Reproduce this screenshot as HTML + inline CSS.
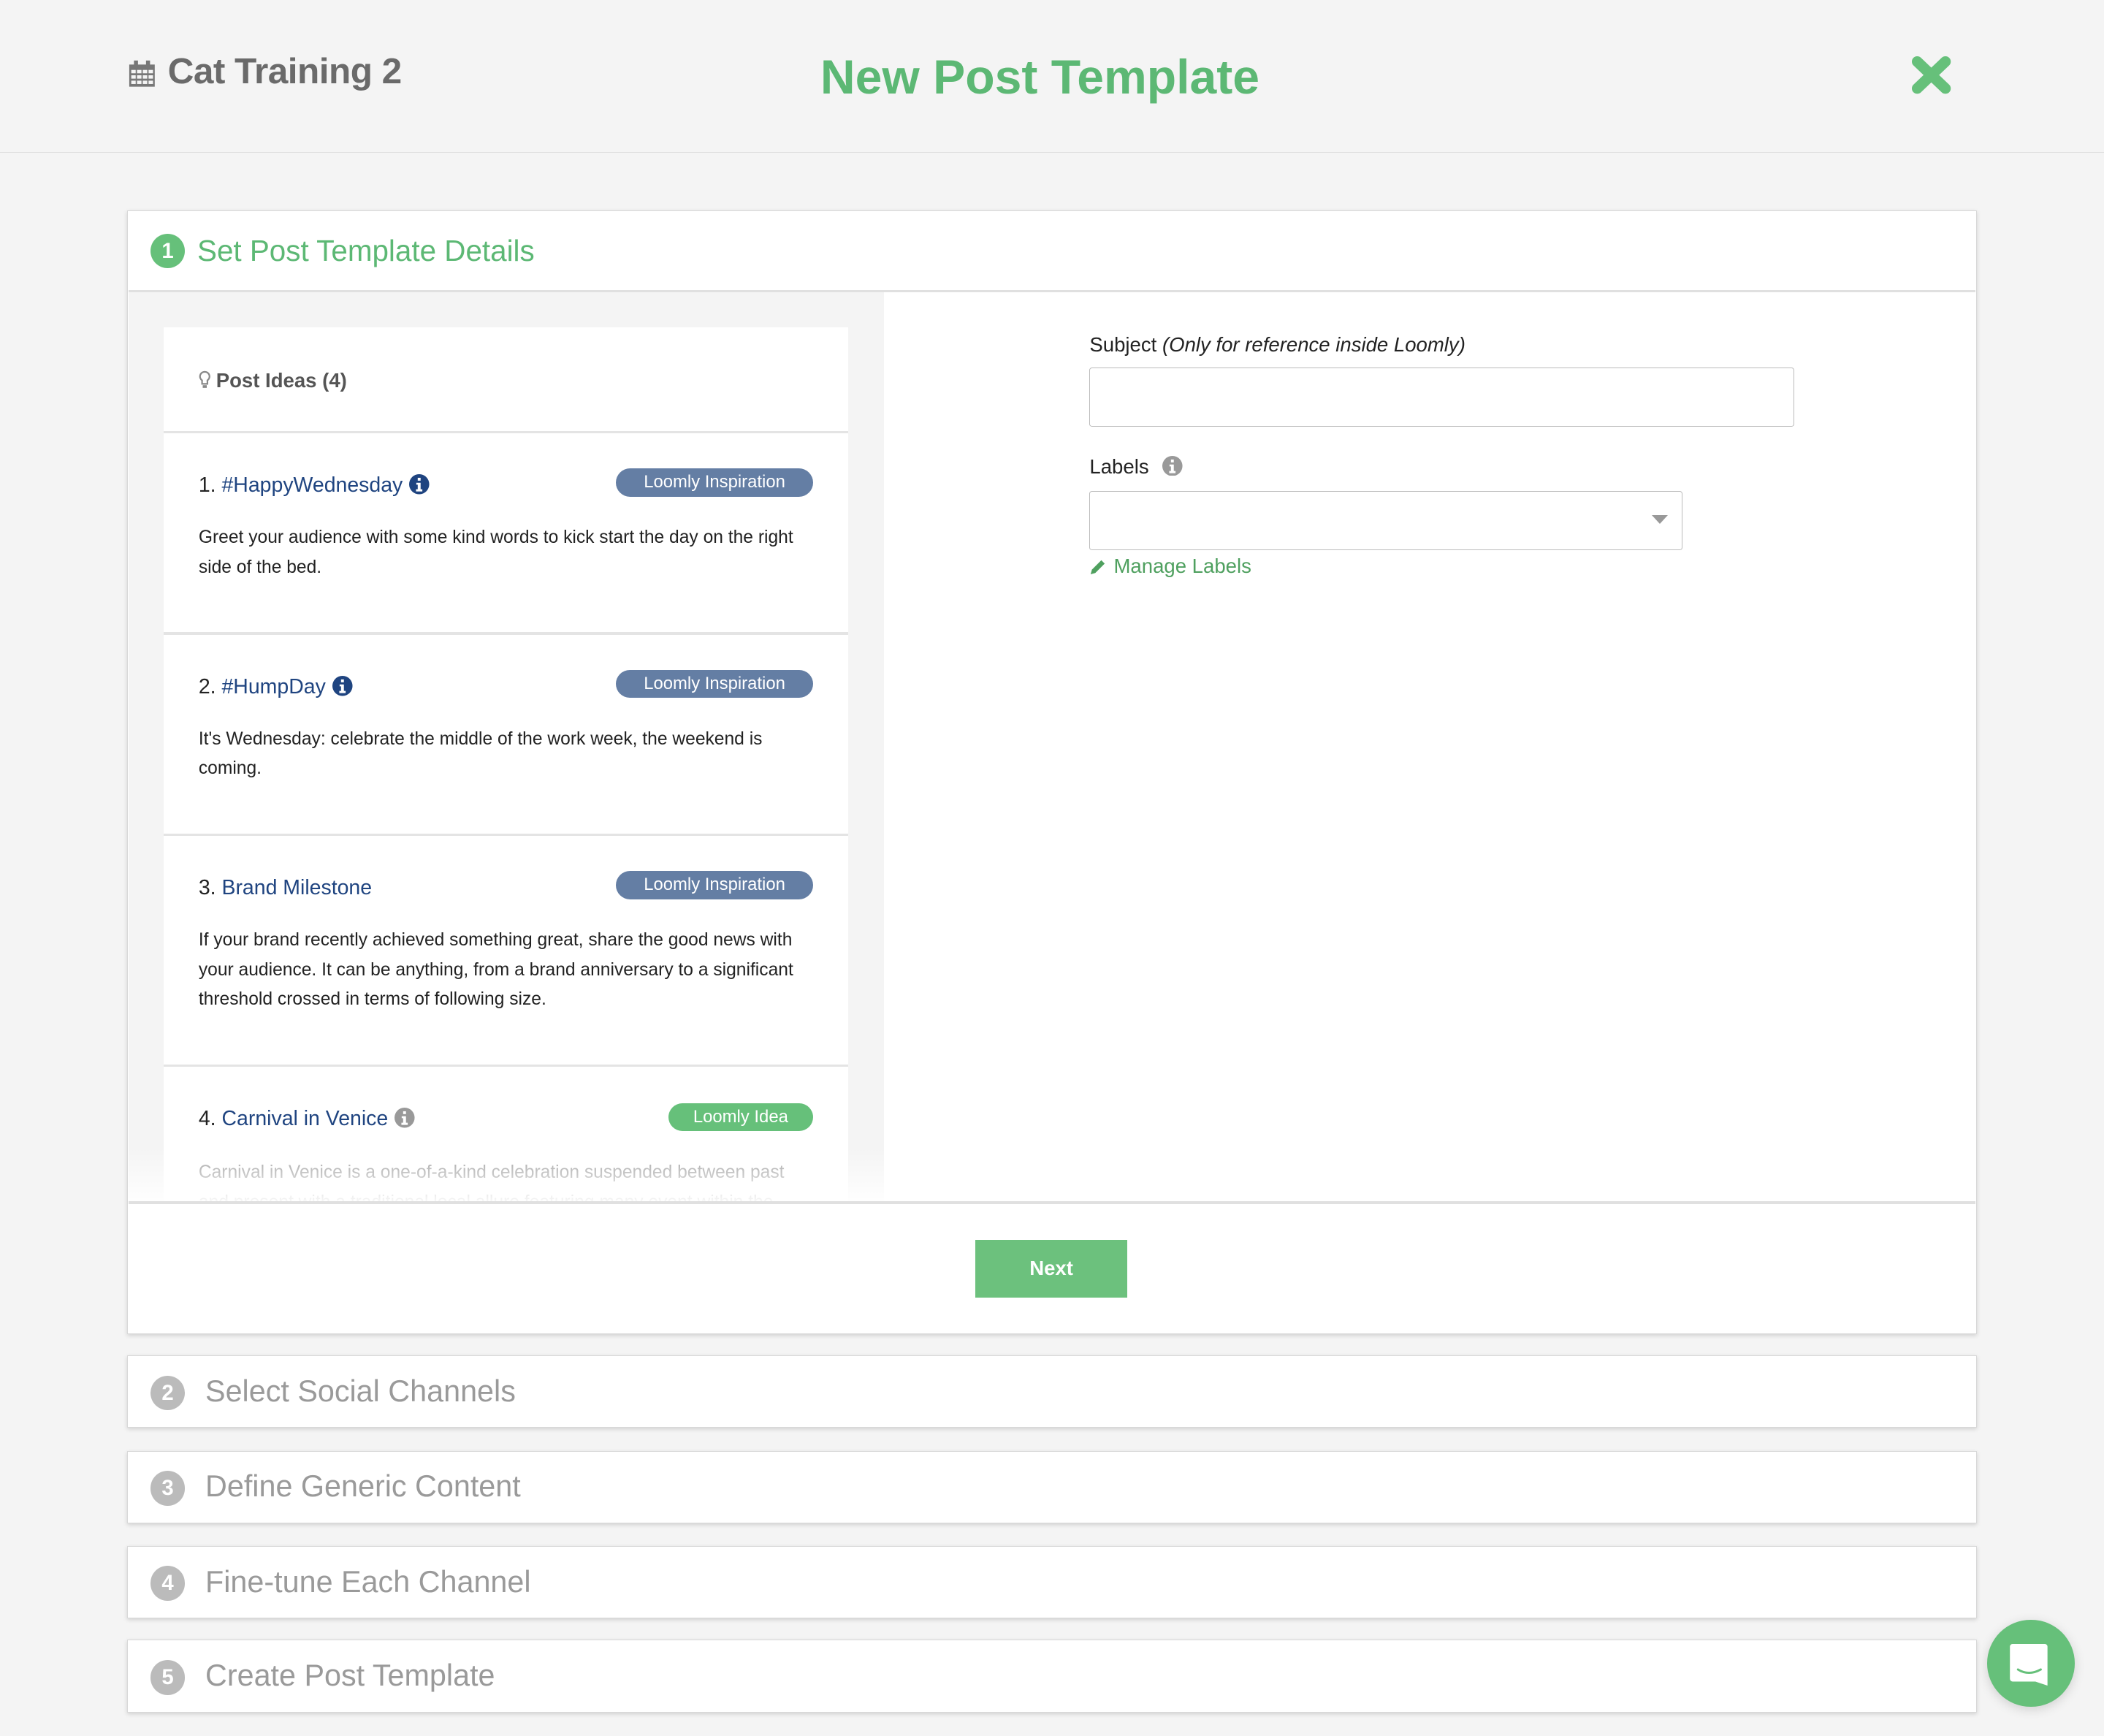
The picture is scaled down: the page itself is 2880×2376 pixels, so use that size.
<!DOCTYPE html>
<html><head><meta charset="utf-8"><style>
*{margin:0;padding:0;box-sizing:border-box}
html,body{width:2880px;height:2376px;overflow:hidden;background:#f4f4f4}
#w{zoom:1.836735;width:1568px;height:1294px;position:relative;font-family:"Liberation Sans",sans-serif}
.a{position:absolute}
.card{position:absolute;left:95px;width:1378px;background:#fff;border:1px solid #d8d8d8;box-shadow:0 1px 3px rgba(0,0,0,.15)}
.num{position:absolute;width:26px;height:26px;border-radius:50%;color:#fff;font-weight:bold;font-size:16px;text-align:center;line-height:26px}
.badge{position:absolute;height:21px;border-radius:11px;color:#fff;font-size:13px;line-height:21px;text-align:center}
.title{position:absolute;left:148px;font-size:15.5px;color:#222}
.title span{color:#1f4480}
.desc{position:absolute;left:148px;width:458px;font-size:13.4px;line-height:22px;color:#222}
.sep{position:absolute;left:122px;width:510px;height:2px;background:#e4e4e4}
.info{display:inline-block;vertical-align:-2px;margin-left:5px}
.ct{position:absolute;left:153px;font-size:22.5px;color:#9a9a9a}
</style></head><body><div id="w">
<div class="a" style="left:0;top:113px;width:1568px;height:1px;background:#ddd"></div>
<svg class="a" style="left:96px;top:44px" width="20" height="21" viewBox="0 0 20 21"><rect x="0.5" y="4" width="19" height="16.5" fill="#777"/><rect x="4" y="1" width="3" height="6" fill="#777"/><rect x="13" y="1" width="3" height="6" fill="#777"/><g fill="#f4f4f4"><rect x="2" y="8" width="3.3" height="2.5"/><rect x="6.3" y="8" width="3.3" height="2.5"/><rect x="10.6" y="8" width="3.3" height="2.5"/><rect x="14.9" y="8" width="3.3" height="2.5"/><rect x="2" y="12" width="3.3" height="2.5"/><rect x="6.3" y="12" width="3.3" height="2.5"/><rect x="10.6" y="12" width="3.3" height="2.5"/><rect x="14.9" y="12" width="3.3" height="2.5"/><rect x="2" y="16" width="3.3" height="2.5"/><rect x="6.3" y="16" width="3.3" height="2.5"/><rect x="10.6" y="16" width="3.3" height="2.5"/><rect x="14.9" y="16" width="3.3" height="2.5"/></g></svg>
<div class="a" style="left:125px;top:37px;font-size:27px;font-weight:bold;color:#6a6a6a;letter-spacing:-0.3px">Cat Training 2</div>
<div class="a" style="left:575px;width:400px;text-align:center;top:37px;font-size:36px;font-weight:bold;color:#5cb874">New Post Template</div>
<svg class="a" style="left:1425px;top:42px" width="29" height="28" viewBox="0 0 29 28"><path d="M4 4L25 24M25 4L4 24" stroke="#66c07a" stroke-width="8" stroke-linecap="round"/></svg>

<div class="card" style="top:157px;height:837px"></div>
<div class="num" style="left:112px;top:174px;background:#66c07a">1</div>
<div class="a" style="left:147px;top:174px;font-size:22px;color:#5cb874">Set Post Template Details</div>
<div class="a" style="left:96px;top:216px;width:1376px;height:2px;background:#e0e0e0"></div>
<div class="a" style="left:96px;top:218px;width:563px;height:678px;background:#f4f4f4"></div>
<div class="a" style="left:122px;top:244px;width:510px;height:652px;background:#fff"></div>
<svg class="a" style="left:148px;top:276px" width="9" height="14" viewBox="0 0 9 14"><path d="M4.5 1a3.5 3.5 0 0 0-2 6.4V10h4V7.4A3.5 3.5 0 0 0 4.5 1z" fill="none" stroke="#888" stroke-width="1.2"/><rect x="3" y="11" width="3" height="2" fill="#888"/></svg>
<div class="a" style="left:161px;top:275px;font-size:15px;font-weight:bold;color:#555">Post Ideas (4)</div>
<div class="sep" style="top:321px"></div>

<div class="title" style="top:353px">1. <span>#HappyWednesday</span><svg class="info" width="15" height="15" viewBox="0 0 14 14"><circle cx="7" cy="7" r="7" fill="#1f4480"/><rect x="6" y="2.5" width="2" height="2" fill="#fff"/><path d="M5 6h3v4.5h1.2V12H4.8v-1.5H6V7.3H5z" fill="#fff"/></svg></div>
<div class="badge" style="left:459px;top:349px;width:147px;background:#647ea4">Loomly Inspiration</div>
<div class="desc" style="top:390px">Greet your audience with some kind words to kick start the day on the right side of the bed.</div>
<div class="sep" style="top:471px"></div>

<div class="title" style="top:503px">2. <span>#HumpDay</span><svg class="info" width="15" height="15" viewBox="0 0 14 14"><circle cx="7" cy="7" r="7" fill="#1f4480"/><rect x="6" y="2.5" width="2" height="2" fill="#fff"/><path d="M5 6h3v4.5h1.2V12H4.8v-1.5H6V7.3H5z" fill="#fff"/></svg></div>
<div class="badge" style="left:459px;top:499px;width:147px;background:#647ea4">Loomly Inspiration</div>
<div class="desc" style="top:540px">It's Wednesday: celebrate the middle of the work week, the weekend is<br>coming.</div>
<div class="sep" style="top:621px"></div>

<div class="title" style="top:653px">3. <span>Brand Milestone</span></div>
<div class="badge" style="left:459px;top:649px;width:147px;background:#647ea4">Loomly Inspiration</div>
<div class="desc" style="top:690px">If your brand recently achieved something great, share the good news with your audience. It can be anything, from a brand anniversary to a significant threshold crossed in terms of following size.</div>
<div class="sep" style="top:793px"></div>

<div class="title" style="top:825px">4. <span>Carnival in Venice</span><svg class="info" width="15" height="15" viewBox="0 0 14 14"><circle cx="7" cy="7" r="7" fill="#999"/><rect x="6" y="2.5" width="2" height="2" fill="#fff"/><path d="M5 6h3v4.5h1.2V12H4.8v-1.5H6V7.3H5z" fill="#fff"/></svg></div>
<div class="badge" style="left:498px;top:822px;width:108px;background:#66c07a">Loomly Idea</div>
<div class="desc" style="top:863px;height:33px;overflow:hidden;color:#999">Carnival in Venice is a one-of-a-kind celebration suspended between past and present with a traditional local allure featuring many event within the</div>
<div class="a" style="left:96px;top:855px;width:563px;height:41px;background:linear-gradient(rgba(255,255,255,0),rgba(255,255,255,.95))"></div>
<div class="a" style="left:96px;top:895px;width:1376px;height:2px;background:#e0e0e0"></div>
<div class="a" style="left:727px;top:924px;width:113px;height:43px;background:#6cc17d;color:#fff;font-weight:bold;font-size:15px;text-align:center;line-height:43px">Next</div>

<div class="a" style="left:812px;top:248px;font-size:15px;color:#222">Subject <i>(Only for reference inside Loomly)</i></div>
<div class="a" style="left:812px;top:274px;width:525px;height:44px;border:1px solid #bbb;border-radius:2px;background:#fff"></div>
<div class="a" style="left:812px;top:339px;font-size:15px;color:#222">Labels <svg class="info" style="margin-left:6px" width="15" height="15" viewBox="0 0 14 14"><circle cx="7" cy="7" r="7" fill="#999"/><rect x="6" y="2.5" width="2" height="2" fill="#fff"/><path d="M5 6h3v4.5h1.2V12H4.8v-1.5H6V7.3H5z" fill="#fff"/></svg></div>
<div class="a" style="left:812px;top:366px;width:442px;height:44px;border:1px solid #bbb;border-radius:2px;background:#fff"></div>
<div class="a" style="left:1231px;top:384px;width:0;height:0;border-left:6px solid transparent;border-right:6px solid transparent;border-top:7px solid #999"></div>
<svg class="a" style="left:812px;top:416px" width="13" height="13" viewBox="0 0 13 13"><path d="M1 12l1-3.5L9 1.5l2.5 2.5L4.5 11z" fill="#4fa05f"/></svg>
<div class="a" style="left:830px;top:413px;font-size:15px;color:#4fa05f">Manage Labels</div>

<div class="card" style="top:1010px;height:54px"></div>
<div class="num" style="left:112px;top:1025px;background:#bbb">2</div>
<div class="ct" style="top:1024px">Select Social Channels</div>
<div class="card" style="top:1081px;height:54px"></div>
<div class="num" style="left:112px;top:1096px;background:#bbb">3</div>
<div class="ct" style="top:1095px">Define Generic Content</div>
<div class="card" style="top:1152px;height:54px"></div>
<div class="num" style="left:112px;top:1167px;background:#bbb">4</div>
<div class="ct" style="top:1166px">Fine-tune Each Channel</div>
<div class="card" style="top:1222px;height:54px"></div>
<div class="num" style="left:112px;top:1237px;background:#bbb">5</div>
<div class="ct" style="top:1236px">Create Post Template</div>

<div class="a" style="left:1481px;top:1207px;width:65px;height:65px;border-radius:50%;background:#66c07a;box-shadow:0 2px 8px rgba(0,0,0,.15)"></div>
<svg class="a" style="left:1481px;top:1207px" width="65" height="65" viewBox="0 0 65 65"><path d="M19 18h24a2 2 0 0 1 2 2v29l-9-3H19a2 2 0 0 1-2-2V20a2 2 0 0 1 2-2z" fill="#fff"/><path d="M23 37q8 5 17 0" stroke="#66c07a" stroke-width="1.6" fill="none" stroke-linecap="round"/></svg>
</div></body></html>
